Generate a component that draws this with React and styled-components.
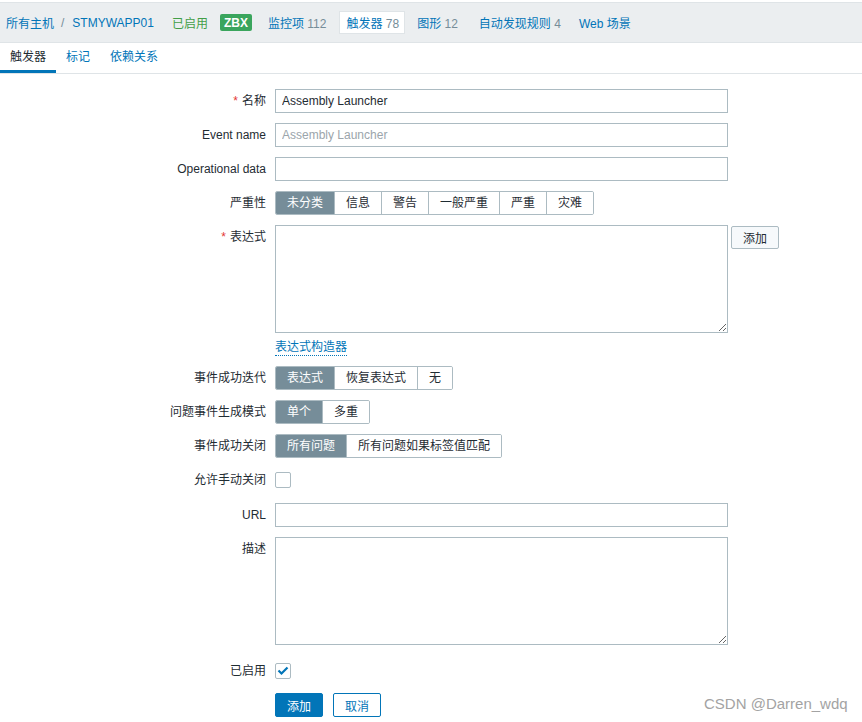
import React from 'react';
import styled, { createGlobalStyle } from 'styled-components';

const GlobalStyle = createGlobalStyle`
  body {
    margin: 0;
    background: #ffffff;
    font-family: "Liberation Sans", Arial, "Noto Sans CJK SC", sans-serif;
    font-size: 12px;
    color: #1f2c33;
  }
`;

const Page = styled('div')`
  position: relative;
  width: 862px;
  min-height: 722px;
  padding-top: 2px;
  box-sizing: border-box;
`;

const NavBar = styled('div')`
  display: flex;
  align-items: center;
  padding-left: 6px;
  background: #ebeef0;
  border-top: 1px solid #dfe4e7;
  border-bottom: 1px solid #dfe4e7;
  box-sizing: border-box;
  height: 41px;
`;

const NavLink = styled('a')`
  color: #0275b8;
  text-decoration: none;
  white-space: nowrap;
  margin-right: ${p => p.$gap ?? 14}px;
`;

const Sep = styled('span')`
  color: #768d99;
  margin: 0 8px 0 7px;
`;

const Enabled = styled('span')`
  color: #429e47;
  margin-right: 12px;
`;

const Badge = styled('span')`
  background: #3aa55d;
  color: #fff;
  font-weight: bold;
  font-size: 12px;
  padding: 2px 4px 1px;
  border-radius: 2px;
  margin-right: 16px;
  line-height: 14px;
`;

const Count = styled('span')`
  color: #768d99;
`;

const CurrentItem = styled('span')`
  background: #ffffff;
  border: 1px solid #dfe4e7;
  padding: 2px 5px 2px 6px;
  margin-right: 12px;
  color: #0275b8;
  white-space: nowrap;
`;

const Tabs = styled('div')`
  display: flex;
  border-bottom: 1px solid #dfe4e7;
  box-sizing: border-box;
  height: 31px;
`;

const Tab = styled('div')`
  padding: 0 10px;
  line-height: 28px;
  color: ${p => (p.$active ? '#1f2c33' : '#0275b8')};
  border-bottom: 3px solid ${p => (p.$active ? '#0275b8' : 'transparent')};
  width: ${p => (p.$w ? `${p.$w}px` : 'auto')};
  box-sizing: border-box;
`;

const Form = styled('div')`
  display: grid;
  grid-template-columns: 266px 453px;
  column-gap: 9px;
  row-gap: 10px;
  padding-top: 15px;
`;

const Label = styled('div')`
  text-align: right;
  line-height: 24px;
  white-space: nowrap;
  margin-top: ${p => p.$mt ?? 0}px;
`;

const Req = styled('span')`
  color: #e33734;
  margin-right: 4px;
`;

const Field = styled('div')`
  display: flex;
  align-items: flex-start;
  flex-direction: ${p => (p.$column ? 'column' : 'row')};
  margin-top: ${p => p.$mt ?? 0}px;
`;

const TextInput = styled('input')`
  width: 453px;
  height: 24px;
  box-sizing: border-box;
  border: 1px solid #acbbc2;
  padding: 0 6px;
  font-family: inherit;
  font-size: 12px;
  color: #1f2c33;
  outline: none;
  &::placeholder {
    color: #9ba5ab;
  }
`;

const TextArea = styled('textarea')`
  display: block;
  width: 453px;
  height: 108px;
  box-sizing: border-box;
  border: 1px solid #acbbc2;
  padding: 4px 6px;
  font-family: inherit;
  font-size: 12px;
  margin: 0;
  outline: none;
`;

const ExprRow = styled('div')`
  display: flex;
  gap: 3px;
  align-items: flex-start;
`;

const SmallButton = styled('button')`
  height: 23px;
  margin-top: 1px;
  padding: 0 10px;
  background: #f6f9fb;
  border: 1px solid #acbbc2;
  border-radius: 2px;
  font-family: inherit;
  font-size: 12px;
  color: #1f2c33;
  width: 48px;
`;

const BuilderLink = styled('a')`
  margin-top: 7px;
  color: #0275b8;
  border-bottom: 1px dotted #0275b8;
  line-height: 15px;
`;

const Segmented = styled('div')`
  display: inline-flex;
  border: 1px solid #acbbc2;
  border-radius: 2px;
  height: 24px;
  box-sizing: border-box;
  overflow: hidden;
`;

const Segment = styled('div')`
  padding: 0 11px;
  line-height: 22px;
  white-space: nowrap;
  background: ${p => (p.$active ? '#768d99' : '#ffffff')};
  color: ${p => (p.$active ? '#ffffff' : '#1f2c33')};
  border-left: 1px solid #acbbc2;
  &:first-child {
    border-left: none;
  }
`;

const Check = styled('div')`
  width: 16px;
  height: 16px;
  margin-top: 4px;
  box-sizing: border-box;
  border: 1px solid #acbbc2;
  border-radius: 2px;
  background: #fff;
  display: flex;
  align-items: center;
  justify-content: center;
`;

const Actions = styled('div')`
  display: flex;
  gap: 10px;
`;

const PrimaryButton = styled('button')`
  height: 24px;
  width: 48px;
  background: #0275b8;
  color: #fff;
  border: 1px solid #0275b8;
  border-radius: 2px;
  font-family: inherit;
  font-size: 12px;
  padding: 0;
`;

const OutlineButton = styled(PrimaryButton)`
  background: #fff;
  color: #0275b8;
`;

const Watermark = styled('div')`
  position: absolute;
  left: 704px;
  top: 695px;
  font-size: 15px;
  color: #a3a3a3;
  white-space: nowrap;
`;

const Segments = ({ items, active = 0 }) => (
  <Segmented>
    {items.map((t, i) => (
      <Segment key={t} $active={i === active}>{t}</Segment>
    ))}
  </Segmented>
);

const CheckIcon = () => (
  <svg width="12" height="10" viewBox="0 0 12 10">
    <path d="M1.5 4.5 L4.5 7.5 L10.5 1.5" fill="none" stroke="#0275b8" strokeWidth="2.2" />
  </svg>
);

export default function App() {
  return (
    <Page>
      <GlobalStyle />
      <NavBar>
        <NavLink $gap={0}>所有主机</NavLink>
        <Sep>/</Sep>
        <NavLink $gap={18}>STMYWAPP01</NavLink>
        <Enabled>已启用</Enabled>
        <Badge>ZBX</Badge>
        <NavLink $gap={13}>监控项 <Count>112</Count></NavLink>
        <CurrentItem>触发器 <Count>78</Count></CurrentItem>
        <NavLink $gap={21}>图形 <Count>12</Count></NavLink>
        <NavLink $gap={18}>自动发现规则 <Count>4</Count></NavLink>
        <NavLink>Web 场景</NavLink>
      </NavBar>
      <Tabs>
        <Tab $active $w={56}>触发器</Tab>
        <Tab>标记</Tab>
        <Tab>依赖关系</Tab>
      </Tabs>
      <Form>
        <Label><Req>*</Req>名称</Label>
        <Field><TextInput defaultValue="Assembly Launcher" /></Field>

        <Label>Event name</Label>
        <Field><TextInput placeholder="Assembly Launcher" /></Field>

        <Label>Operational data</Label>
        <Field><TextInput /></Field>

        <Label>严重性</Label>
        <Field><Segments items={['未分类', '信息', '警告', '一般严重', '严重', '灾难']} /></Field>

        <Label><Req>*</Req>表达式</Label>
        <Field $column>
          <ExprRow>
            <TextArea />
            <SmallButton>添加</SmallButton>
          </ExprRow>
          <BuilderLink>表达式构造器</BuilderLink>
        </Field>

        <Label>事件成功迭代</Label>
        <Field><Segments items={['表达式', '恢复表达式', '无']} /></Field>

        <Label>问题事件生成模式</Label>
        <Field><Segments items={['单个', '多重']} /></Field>

        <Label>事件成功关闭</Label>
        <Field><Segments items={['所有问题', '所有问题如果标签值匹配']} /></Field>

        <Label>允许手动关闭</Label>
        <Field><Check /></Field>

        <Label $mt={1}>URL</Label>
        <Field $mt={1}><TextInput /></Field>

        <Label>描述</Label>
        <Field><TextArea /></Field>

        <Label $mt={4}>已启用</Label>
        <Field $mt={4}><Check><CheckIcon /></Check></Field>

        <div />
        <Actions>
          <PrimaryButton>添加</PrimaryButton>
          <OutlineButton>取消</OutlineButton>
        </Actions>
      </Form>
      <Watermark>CSDN @Darren_wdq</Watermark>
    </Page>
  );
}
